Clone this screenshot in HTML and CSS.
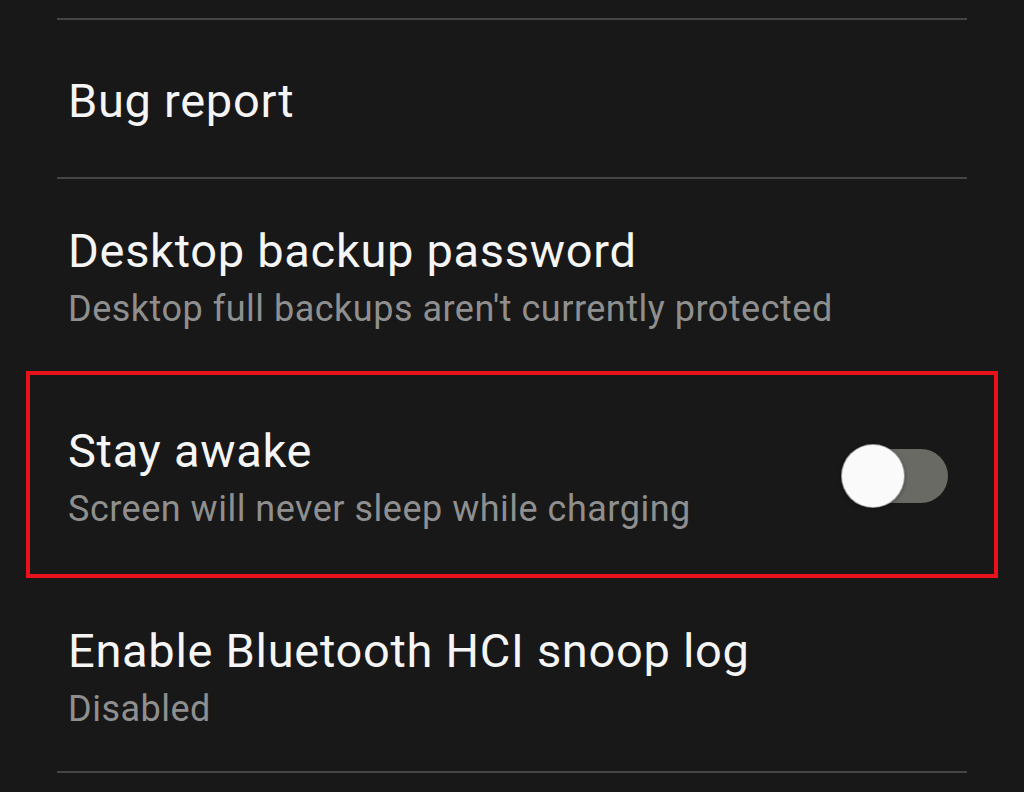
FILE: index.html
```html
<!DOCTYPE html>
<html>
<head>
<meta charset="utf-8">
<link rel="stylesheet" href="styles.css">
</head>
<body>
<div class="list">
  <div class="row row-single divided">
    <div class="title">Bug report</div>
  </div>
  <div class="row">
    <div class="title">Desktop backup password</div>
    <div class="summary">Desktop full backups aren't currently protected</div>
  </div>
  <div class="row row-switch highlighted">
    <div class="texts">
      <div class="title">Stay awake</div>
      <div class="summary">Screen will never sleep while charging</div>
    </div>
    <div class="switch"><div class="thumb"></div></div>
  </div>
  <div class="row row-last">
    <div class="title">Enable Bluetooth HCI snoop log</div>
    <div class="summary">Disabled</div>
  </div>
</div>
</body>
</html>
```
FILE: styles.css
```css
html, body {
  margin: 0;
  padding: 0;
  background: #181818;
}
body {
  width: 1024px;
  height: 792px;
  overflow: hidden;
  font-family: Roboto, "Noto Sans", sans-serif;
}
.list {
  margin: 18px 0 0 57px;
  width: 910px;
  border-top: 2px solid #454545;
}
.row {
  padding: 45px 0 39px 11px;
  position: relative;
}
.row-single {
  padding: 54px 0 49px 11px;
}
.divided {
  border-bottom: 2px solid #454545;
}
.row-last {
  padding-bottom: 31px;
  border-bottom: 2px solid #454545;
}
.title {
  color: #f5f5f5;
  font-size: 47px;
  line-height: 54px;
  letter-spacing: 0.7px;
}
.summary {
  color: #8f8f8f;
  font-size: 36px;
  line-height: 62px;
  letter-spacing: 0.5px;
}
.row-switch {
  display: flex;
  align-items: center;
  justify-content: space-between;
}
.highlighted::after {
  content: "";
  position: absolute;
  left: -31px;
  right: -31px;
  top: -8px;
  bottom: 1px;
  border: 4px solid #e8121b;
  pointer-events: none;
}
.switch {
  position: relative;
  width: 102px;
  height: 54px;
  border-radius: 27px;
  background: #6a6a65;
  margin-right: 19px;
  margin-top: -12px;
}
.thumb {
  position: absolute;
  left: -4px;
  top: -4px;
  width: 62px;
  height: 62px;
  border-radius: 50%;
  background: #fafafa;
  box-shadow: 0 0 0 1px #9a9a9a, 0 1px 4px rgba(0,0,0,0.6);
}
```
